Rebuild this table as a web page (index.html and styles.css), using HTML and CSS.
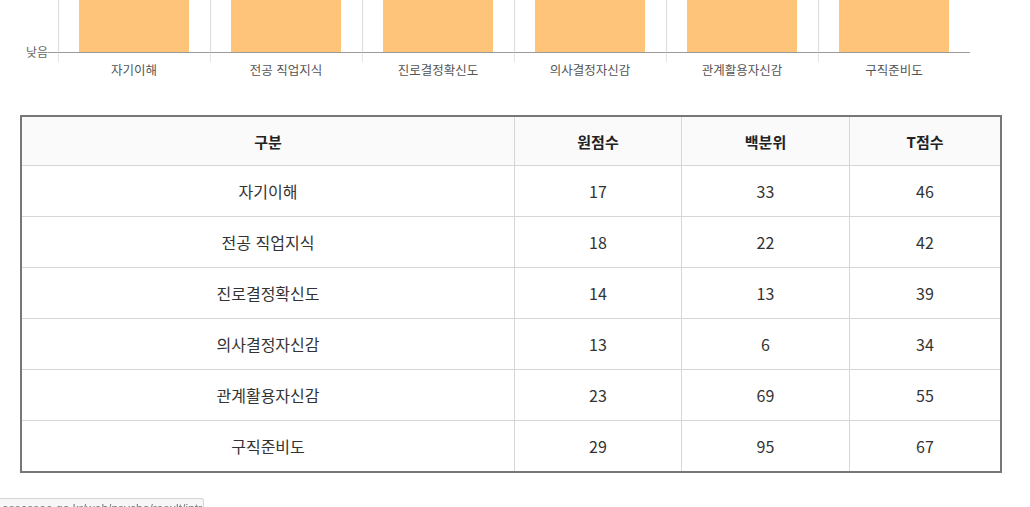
FILE: index.html
```html
<!DOCTYPE html>
<html lang="ko">
<head>
<meta charset="utf-8">
<title>검사 결과</title>
<link rel="stylesheet" href="styles.css">
</head>
<body>
<div class="chart">
  <div class="yaxis">
    <span class="ylabel">낮음</span>
    <span class="ytick"></span>
  </div>
  <div class="plot">
    <div class="col"><div class="bar-area"><div class="bar"></div></div><div class="tick"></div><div class="xlabel">자기이해</div></div>
    <div class="col"><div class="bar-area"><div class="bar"></div></div><div class="tick"></div><div class="xlabel">전공 직업지식</div></div>
    <div class="col"><div class="bar-area"><div class="bar"></div></div><div class="tick"></div><div class="xlabel">진로결정확신도</div></div>
    <div class="col"><div class="bar-area"><div class="bar"></div></div><div class="tick"></div><div class="xlabel">의사결정자신감</div></div>
    <div class="col"><div class="bar-area"><div class="bar"></div></div><div class="tick"></div><div class="xlabel">관계활용자신감</div></div>
    <div class="col"><div class="bar-area"><div class="bar"></div></div><div class="tick"></div><div class="xlabel">구직준비도</div></div>
  </div>
</div>

<div class="table-wrap">
  <table class="score">
    <colgroup>
      <col class="c1"><col class="c2"><col class="c3"><col class="c4">
    </colgroup>
    <thead>
      <tr><th>구분</th><th>원점수</th><th>백분위</th><th>T점수</th></tr>
    </thead>
    <tbody>
      <tr><td>자기이해</td><td>17</td><td>33</td><td>46</td></tr>
      <tr><td>전공 직업지식</td><td>18</td><td>22</td><td>42</td></tr>
      <tr><td>진로결정확신도</td><td>14</td><td>13</td><td>39</td></tr>
      <tr><td>의사결정자신감</td><td>13</td><td>6</td><td>34</td></tr>
      <tr><td>관계활용자신감</td><td>23</td><td>69</td><td>55</td></tr>
      <tr><td>구직준비도</td><td>29</td><td>95</td><td>67</td></tr>
    </tbody>
  </table>
</div>

<div class="status">assessee.go.kr/web/psycho/result/intro</div>
</body>
</html>
```

FILE: styles.css
```css
* { box-sizing: border-box; }

html, body {
  margin: 0;
  padding: 0;
  background: #fff;
  font-family: "Noto Sans CJK KR", "Noto Sans", sans-serif;
  color: #333;
}

/* chart */
.chart {
  display: flex;
  height: 115px;
}

.yaxis {
  width: 58px;
  height: 53px;
  display: flex;
  justify-content: flex-end;
  align-items: flex-end;
}

.ylabel {
  font-size: 12px;
  line-height: 14px;
  color: #666;
  margin-bottom: -6px;
}

.ytick {
  width: 10px;
  height: 1px;
  background: #9a9a9a;
}

.plot {
  display: flex;
  width: 912px;
}

.col {
  width: 152px;
  display: flex;
  flex-direction: column;
}

.bar-area {
  height: 53px;
  border-left: 1px solid #dcdcdc;
  border-bottom: 1px solid #9a9a9a;
  padding-left: 20px;
  display: flex;
  align-items: flex-end;
}

.bar {
  width: 110px;
  height: 100%;
  background: #fdc47a;
}

.tick {
  height: 9px;
  border-left: 1px solid #e4e4e4;
}

.xlabel {
  text-align: center;
  font-size: 12.5px;
  line-height: 16px;
  color: #555;
}

/* table */
.table-wrap {
  margin-left: 20px;
  width: 982px;
  border: 2px solid #777;
}

.score {
  width: 978px;
  border-collapse: separate;
  border-spacing: 0;
  table-layout: fixed;
}

.c1 { width: 492px; }
.c2 { width: 167px; }
.c3 { width: 168px; }
.c4 { width: 151px; }

.score th,
.score td {
  padding: 0;
  text-align: center;
  vertical-align: middle;
  border-bottom: 1px solid #d6d6d6;
  font-size: 16px;
  color: #333;
}

.score th + th,
.score td + td {
  border-left: 1px solid #d6d6d6;
}

.score th {
  height: 49px;
  background: #fafafa;
  font-weight: 700;
  font-size: 15px;
  color: #222;
}

.score td {
  height: 51px;
}

.score tbody tr:last-child td {
  border-bottom: none;
  height: 50px;
}

/* browser status bubble */
.status {
  position: fixed;
  left: 0;
  bottom: -12px;
  width: 204px;
  height: 21px;
  padding: 3px 0 0 2px;
  background: #f7f7f7;
  border: 1px solid #d4d4d4;
  border-left: none;
  border-radius: 0 3px 0 0;
  font-family: "Liberation Sans", Arial, sans-serif;
  font-size: 12px;
  line-height: 15px;
  color: #777;
  white-space: nowrap;
  overflow: hidden;
}
```
